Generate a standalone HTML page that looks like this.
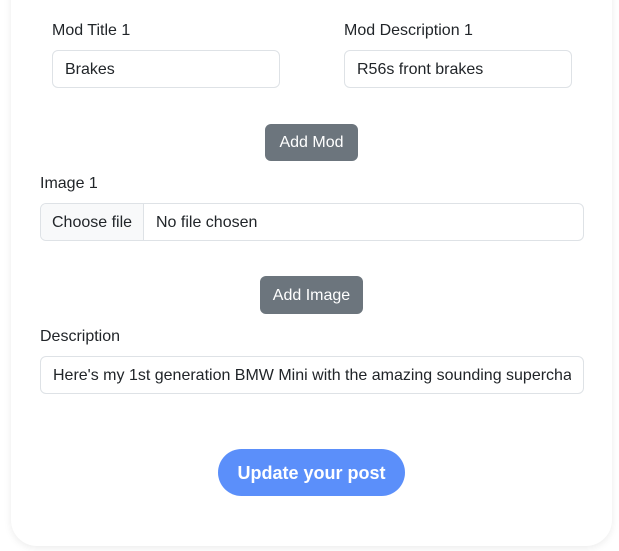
<!DOCTYPE html>
<html><head><style>
*{box-sizing:border-box;margin:0;padding:0}
body{width:619px;height:551px;background:#fff;font-family:"Liberation Sans",sans-serif;color:#212529;position:relative;overflow:hidden}
.card{position:absolute;left:11px;top:-30px;width:601px;height:576px;background:#fff;border-radius:26px;box-shadow:0 2px 8px rgba(0,0,0,.08)}
.lbl{position:absolute;font-size:16px;color:#212529}
.inp{position:absolute;height:38px;border:1px solid #dee2e6;border-radius:6px;background:#fff;font-size:16px;padding:0 12px;line-height:38px;white-space:nowrap;overflow:hidden}
.btn{position:absolute;background:#6c757d;color:#fff;border-radius:6px;font-size:16px;text-align:center}
</style></head><body>
<div class="card"></div>
<div class="lbl" style="left:52px;top:22px">Mod Title 1</div>
<div class="lbl" style="left:344px;top:22px">Mod Description 1</div>
<div class="inp" style="left:52px;top:50px;width:228px">Brakes</div>
<div class="inp" style="left:344px;top:50px;width:228px">R56s front brakes</div>
<div class="btn" style="left:265px;top:124px;width:93px;height:37px;line-height:38px">Add Mod</div>
<div class="lbl" style="left:40px;top:175px">Image 1</div>
<div class="inp" style="left:40px;top:203px;width:544px;padding:0">
<span style="display:inline-block;width:103px;background:#f8f9fa;border-right:1px solid #dee2e6;padding-left:11px;height:36px;line-height:37px">Choose file</span><span style="padding-left:12px">No file chosen</span></div>
<div class="btn" style="left:260px;top:276px;width:103px;height:38px;line-height:39px">Add Image</div>
<div class="lbl" style="left:40px;top:328px">Description</div>
<div class="inp" style="left:40px;top:356px;width:544px"><div style="width:518px;overflow:hidden">Here's my 1st generation BMW Mini with the amazing sounding supercharger</div></div>
<div style="position:absolute;left:218px;top:449px;width:187px;height:47px;border-radius:24px;background:#5b8ffa;color:#fff;font-weight:bold;font-size:18px;text-align:center;line-height:48px">Update your post</div>
</body></html>
